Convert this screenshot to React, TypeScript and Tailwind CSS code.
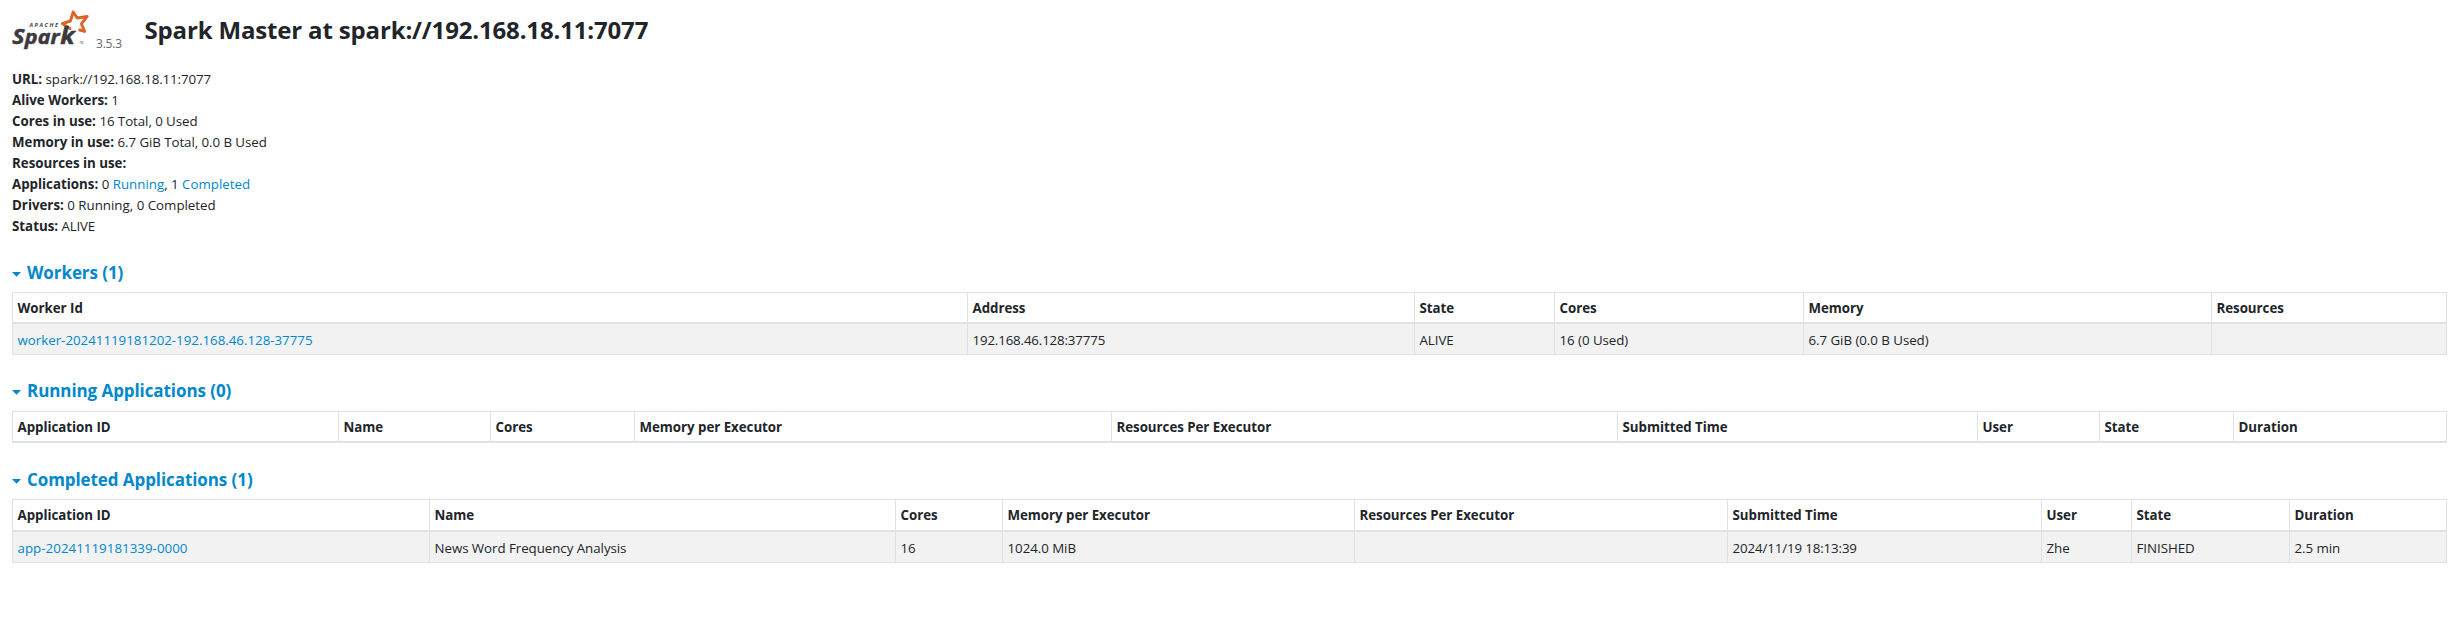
import type { ReactNode } from "react";

type Column = { label: string; width: string };

function Logo() {
  return (
    <svg className="block h-[44px] w-[78px] shrink-0" viewBox="12 8 78 44">
      <path
        d="M84.6 31.4 L79.6 30 M70 28.6 L62.4 23.6 L70.4 21 L73.2 12 L77.2 18 L87.2 16.4 L81.4 23.8 L84.6 31.4"
        fill="none"
        stroke="#dc6427"
        strokeWidth="2.9"
        strokeLinejoin="round"
        strokeLinecap="round"
      />
      <text x="29.5" y="27.4" fontFamily="Open Sans" fontWeight="700" fontStyle="italic" fontSize="5.6" textLength="28.5" fill="#3c3a3e">
        APACHE
      </text>
      <text
        transform="scale(1.13 1)"
        y="44"
        fontFamily="Open Sans"
        fontWeight="700"
        fontStyle="italic"
        fill="#3c3a3e"
        stroke="#3c3a3e"
        strokeWidth="0.5"
      >
        <tspan x="10.9" fontSize="20.5">S</tspan>
        <tspan x="22" fontSize="19">par</tspan>
        <tspan x="53.4" fontSize="22.5">k</tspan>
      </text>
      <text x="79.5" y="44" fontFamily="Open Sans" fontSize="2.6" fill="#3c3a3e">
        TM
      </text>
    </svg>
  );
}

function Info({ label, children }: { label: string; children?: ReactNode }) {
  return (
    <li className="h-[21px] whitespace-nowrap">
      <strong className="font-bold">{label}</strong> {children}
    </li>
  );
}

function Heading({ children }: { children: string }) {
  return (
    <h4 className="flex h-[21px] items-center gap-[6px] text-[17px] font-bold tracking-[-0.08px] text-[#0088cc]">
      <svg className="mt-[3px] h-[5px] w-[9px]" viewBox="0 0 9 5">
        <path d="M0 0H9L4.5 4.7Z" fill="#0088cc" />
      </svg>
      <a>{children}</a>
    </h4>
  );
}

function DataTable({ columns, rows, headHeight }: { columns: Column[]; rows: ReactNode[][]; headHeight: string }) {
  return (
    <table className="w-[2435px] table-fixed border-separate border-spacing-0 border-r border-t border-[#dee2e6] text-left">
      <colgroup>
        {columns.map((c) => (
          <col key={c.label + c.width} className={c.width} />
        ))}
      </colgroup>
      <thead>
        <tr className={headHeight}>
          {columns.map((c) => (
            <th key={c.label} className="border-b-2 border-l border-[#dee2e6] pt-px pb-0 pl-[4.5px] align-middle font-bold tracking-[-0.03px] whitespace-nowrap">
              {c.label}
            </th>
          ))}
        </tr>
      </thead>
      <tbody>
        {rows.map((row, r) => (
          <tr key={r} className="h-[31px] bg-[#f2f2f2]">
            {row.map((cell, i) => (
              <td key={i} className="border-b border-l border-[#dee2e6] pt-[2px] pb-0 pl-[4.5px] align-middle tracking-[-0.04px] whitespace-nowrap">
                {cell}
              </td>
            ))}
          </tr>
        ))}
      </tbody>
    </table>
  );
}

const workerColumns: Column[] = [
  { label: "Worker Id", width: "w-[955px]" },
  { label: "Address", width: "w-[447px]" },
  { label: "State", width: "w-[140px]" },
  { label: "Cores", width: "w-[249px]" },
  { label: "Memory", width: "w-[408px]" },
  { label: "Resources", width: "w-[235px]" },
];

const runningColumns: Column[] = [
  { label: "Application ID", width: "w-[326px]" },
  { label: "Name", width: "w-[152px]" },
  { label: "Cores", width: "w-[144px]" },
  { label: "Memory per Executor", width: "w-[477px]" },
  { label: "Resources Per Executor", width: "w-[506px]" },
  { label: "Submitted Time", width: "w-[360px]" },
  { label: "User", width: "w-[122px]" },
  { label: "State", width: "w-[134px]" },
  { label: "Duration", width: "w-[213px]" },
];

const completedColumns: Column[] = [
  { label: "Application ID", width: "w-[417px]" },
  { label: "Name", width: "w-[466px]" },
  { label: "Cores", width: "w-[107px]" },
  { label: "Memory per Executor", width: "w-[352px]" },
  { label: "Resources Per Executor", width: "w-[373px]" },
  { label: "Submitted Time", width: "w-[314px]" },
  { label: "User", width: "w-[90px]" },
  { label: "State", width: "w-[158px]" },
  { label: "Duration", width: "w-[157px]" },
];

export default function App() {
  return (
    <div className="min-h-[627px] bg-white pl-3 font-['Open_Sans',sans-serif] text-[13.3px] leading-[21px] text-[#212529]">
      <header className="flex h-[69px] pt-2">
        <Logo />
        <span className="mt-[25px] ml-[6px] w-[48.5px] text-[12px] tracking-[-0.2px] text-[#666666]">3.5.3</span>
        <h3 className="mt-[7px] text-[24px] leading-[30px] font-bold tracking-[-0.16px] whitespace-nowrap">
          Spark Master at spark://192.168.18.11:7077
        </h3>
      </header>
      <ul>
        <Info label="URL:">
          <span className="tracking-[-0.1px]">spark://192.168.18.11:7077</span>
        </Info>
        <Info label="Alive Workers:">1</Info>
        <Info label="Cores in use:">
          <span className="tracking-[-0.06px]">16 Total, 0 Used</span>
        </Info>
        <Info label="Memory in use:">
          <span className="tracking-[-0.06px]">6.7 GiB Total, 0.0 B Used</span>
        </Info>
        <Info label="Resources in use:" />
        <Info label="Applications:">
          0 <a className="text-[#0088cc]">Running</a>, 1 <a className="text-[#0088cc]">Completed</a>
        </Info>
        <Info label="Drivers:">0 Running, 0 Completed</Info>
        <Info label="Status:">
          <span className="tracking-[-0.2px]">ALIVE</span>
        </Info>
      </ul>
      <section className="mt-[25px]">
        <Heading>Workers (1)</Heading>
        <div className="pt-[9px]">
          <DataTable
            columns={workerColumns}
            headHeight="h-[31px]"
            rows={[
              [
                <a className="tracking-normal text-[#0088cc]">worker-20241119181202-192.168.46.128-37775</a>,
                <span className="tracking-[-0.15px]">192.168.46.128:37775</span>,
                "ALIVE",
                "16 (0 Used)",
                "6.7 GiB (0.0 B Used)",
                "",
              ],
            ]}
          />
        </div>
      </section>
      <section className="mt-[25px]">
        <Heading>Running Applications (0)</Heading>
        <div className="pt-[10px]">
          <DataTable columns={runningColumns} headHeight="h-[31px]" rows={[]} />
        </div>
      </section>
      <section className="mt-[26px]">
        <Heading>Completed Applications (1)</Heading>
        <div className="pt-[9px]">
          <DataTable
            columns={completedColumns}
            headHeight="h-[32px]"
            rows={[
              [
                <a className="tracking-[0.04px] text-[#0088cc]">app-20241119181339-0000</a>,
                "News Word Frequency Analysis",
                "16",
                "1024.0 MiB",
                "",
                <span className="tracking-[-0.12px]">2024/11/19 18:13:39</span>,
                "Zhe",
                "FINISHED",
                "2.5 min",
              ],
            ]}
          />
        </div>
      </section>
    </div>
  );
}
